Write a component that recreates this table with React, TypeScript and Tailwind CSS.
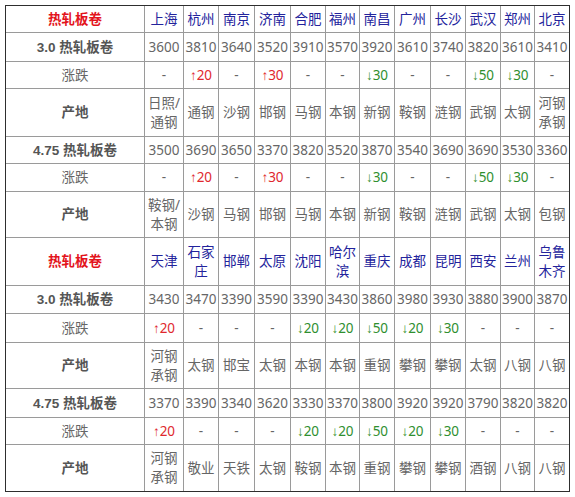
import type { ReactNode } from "react";

type Change = { dir: "up" | "down"; v: number } | null;

type Block = {
  cities: string[];
  p30: number[];
  c30: Change[];
  o30: string[];
  p475: number[];
  c475: Change[];
  o475: string[];
};

const up = (v: number): Change => ({ dir: "up", v });
const dn = (v: number): Change => ({ dir: "down", v });

const BLOCKS: Block[] = [
  {
    cities: ["上海", "杭州", "南京", "济南", "合肥", "福州", "南昌", "广州", "长沙", "武汉", "郑州", "北京"],
    p30: [3600, 3810, 3640, 3520, 3910, 3570, 3920, 3610, 3740, 3820, 3610, 3410],
    c30: [null, up(20), null, up(30), null, null, dn(30), null, null, dn(50), dn(30), null],
    o30: ["日照/通钢", "通钢", "沙钢", "邯钢", "马钢", "本钢", "新钢", "鞍钢", "涟钢", "武钢", "太钢", "河钢承钢"],
    p475: [3500, 3690, 3650, 3370, 3820, 3520, 3870, 3540, 3690, 3690, 3530, 3360],
    c475: [null, up(20), null, up(30), null, null, dn(30), null, null, dn(50), dn(30), null],
    o475: ["鞍钢/本钢", "沙钢", "马钢", "邯钢", "马钢", "本钢", "新钢", "鞍钢", "涟钢", "武钢", "太钢", "包钢"],
  },
  {
    cities: ["天津", "石家庄", "邯郸", "太原", "沈阳", "哈尔滨", "重庆", "成都", "昆明", "西安", "兰州", "乌鲁木齐"],
    p30: [3430, 3470, 3390, 3590, 3390, 3430, 3860, 3980, 3930, 3880, 3900, 3870],
    c30: [up(20), null, null, null, dn(20), dn(20), dn(50), dn(20), dn(30), null, null, null],
    o30: ["河钢承钢", "太钢", "邯宝", "太钢", "本钢", "本钢", "重钢", "攀钢", "攀钢", "太钢", "八钢", "八钢"],
    p475: [3370, 3390, 3340, 3620, 3330, 3370, 3800, 3920, 3920, 3790, 3820, 3820],
    c475: [up(20), null, null, null, dn(20), dn(20), dn(50), dn(20), dn(30), null, null, null],
    o475: ["河钢承钢", "敬业", "天铁", "太钢", "鞍钢", "本钢", "重钢", "攀钢", "攀钢", "酒钢", "八钢", "八钢"],
  },
];

// two-line cells in the reference wrap after the 2nd character (or the slash)
function wrap(s: string) {
  if (s.length <= 2) return s;
  const cut = s.includes("/") ? s.indexOf("/") + 1 : 2;
  return (
    <>
      {s.slice(0, cut)}
      <br />
      {s.slice(cut)}
    </>
  );
}

function ChangeText({ c }: { c: Change }) {
  if (!c) return <span>-</span>;
  return (
    <span className={c.dir === "up" ? "text-[#e0282e]" : "text-[#2f8f2f]"}>
      <span className="font-['Liberation_Sans',sans-serif]">{c.dir === "up" ? "↑" : "↓"}</span>
      {c.v}
    </span>
  );
}

function SizeLabel({ size }: { size: string }) {
  return (
    <span>
      <span className="font-['Liberation_Sans',sans-serif]">{size}</span> 热轧板卷
    </span>
  );
}

const ROW_COUNT = 14;

export default function App() {
  const rows: { label: ReactNode; labelClass: string; cells: ReactNode[]; cellClass: string }[] = [];

  BLOCKS.forEach((b) => {
    rows.push({
      label: "热轧板卷",
      labelClass: "font-bold text-[#e3141c]",
      cells: b.cities.map(wrap),
      cellClass: "text-[#23239c]",
    });
    rows.push({ label: <SizeLabel size="3.0" />, labelClass: "font-bold text-[#555]", cells: b.p30, cellClass: "" });
    rows.push({ label: "涨跌", labelClass: "", cells: b.c30.map((c, i) => <ChangeText key={i} c={c} />), cellClass: "" });
    rows.push({ label: "产地", labelClass: "font-bold text-[#555]", cells: b.o30.map(wrap), cellClass: "" });
    rows.push({ label: <SizeLabel size="4.75" />, labelClass: "font-bold text-[#555]", cells: b.p475, cellClass: "" });
    rows.push({ label: "涨跌", labelClass: "", cells: b.c475.map((c, i) => <ChangeText key={i} c={c} />), cellClass: "" });
    rows.push({ label: "产地", labelClass: "font-bold text-[#555]", cells: b.o475.map(wrap), cellClass: "" });
  });

  return (
    <div className="min-h-[497px] bg-white pl-[5px] pt-[5px] font-['Noto_Sans','Noto_Sans_CJK_SC',sans-serif] text-[13.5px] leading-[19px] text-[#666]">
      <div className="w-[565px] border border-[#2e2e2e]">
        <div className="grid grid-cols-[139px_39px_35px_36px_36px_35px_34px_35px_36px_35px_35px_34px_34px] grid-rows-[27px_29px_27px_48px_27px_28px_46px_48px_28px_29px_46px_29px_27px_46px]">
          {rows.map((r, ri) => {
            const lastRow = ri === ROW_COUNT - 1;
            const bb = lastRow ? "" : "border-b";
            return [
              <div
                key={`l${ri}`}
                className={`flex items-center justify-center border-r border-[#9a9a9a] ${bb} ${r.labelClass}`}
              >
                {r.label}
              </div>,
              ...r.cells.map((c, ci) => (
                <div
                  key={`c${ri}-${ci}`}
                  className={`flex items-center justify-center whitespace-nowrap text-center border-[#9a9a9a] ${ci === 11 ? "" : "border-r"} ${bb} ${r.cellClass}`}
                >
                  <div>{c}</div>
                </div>
              )),
            ];
          })}
        </div>
      </div>
    </div>
  );
}
